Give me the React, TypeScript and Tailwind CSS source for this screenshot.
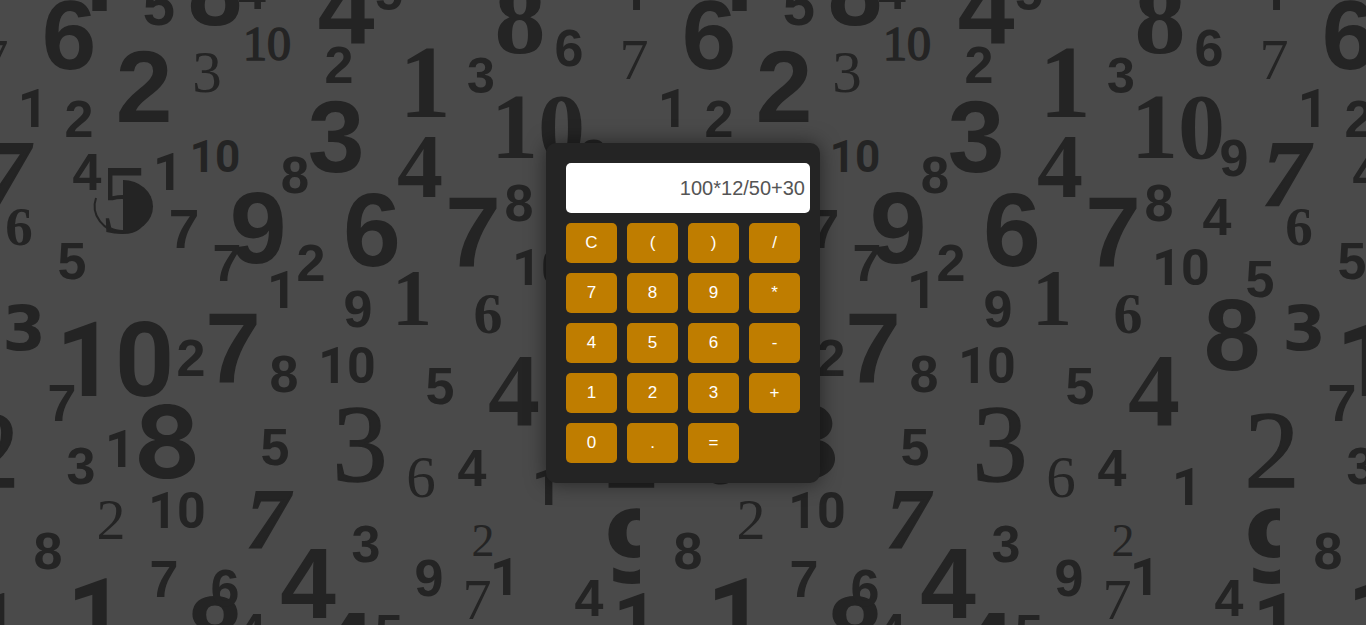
import { useState } from "react";

type Digit = [string, number, number, number, "A" | "R" | "D" | "N" | "T" | "S" | "M" | "I"];

const FONTS = {
    A: "font-['Liberation_Sans',sans-serif] font-bold",
    R: "font-['Roboto',sans-serif] font-bold",
    D: "font-['DejaVu_Sans',sans-serif] font-bold",
    N: "font-['Inter',sans-serif] font-bold",
    T: "font-['Liberation_Serif',serif] font-bold",
    S: "font-['Liberation_Serif',serif]",
    M: "font-['Liberation_Serif',serif] stroke-[#242424] stroke-[1.5px]",
    I: "font-['Liberation_Serif',serif] font-bold italic stroke-[#242424] stroke-2",
};

// text, center x, baseline y, size, font — one 640x640 tile of the wallpaper
const DIGITS: Digit[] = [
    ["6", 69, 69, 98, "A"],
    ["5", 159, 25, 58, "A"],
    ["5", 159, 665, 58, "A"],
    ["8", 215, 25, 98, "A"],
    ["8", 215, 665, 98, "A"],
    ["4", 252, 9, 50, "A"],
    ["4", 252, 649, 50, "A"],
    ["10", 267, 60, 48, "M"],
    ["3", 207, 92, 59, "S"],
    ["2", 144, 122, 102, "A"],
    ["1", 33, 127, 53, "R"],
    ["2", 79, 137, 52, "A"],
    ["7", 646, 205, 93, "I"],
    ["7", 6, 205, 93, "I"],
    ["4", 87, 190, 52, "A"],
    ["5", 125, 233, 100, "S"],
    ["1", 168, 190, 52, "R"],
    ["10", 215, 172, 44, "R"],
    ["8", 295, 193, 51, "A"],
    ["9", 258, 263, 102, "A"],
    ["7", 184, 248, 55, "A"],
    ["6", 19, 245, 55, "T"],
    ["5", 72, 279, 52, "A"],
    ["7", 227, 281, 52, "A"],
    ["2", 311, 281, 52, "A"],
    ["1", 282, 308, 52, "R"],
    ["3", 24, 350, 62, "D"],
    ["10", 115, 396, 103, "R"],
    ["2", 191, 376, 52, "A"],
    ["7", 233, 383, 100, "A"],
    ["8", 284, 392, 52, "A"],
    ["10", 347, 383, 50, "R"],
    ["7", 62, 421, 52, "A"],
    ["2", 632, 487, 110, "M"],
    ["2", -8, 487, 110, "M"],
    ["8", 167, 478, 100, "N"],
    ["3", 81, 484, 52, "A"],
    ["1", 120, 467, 52, "R"],
    ["5", 275, 465, 52, "A"],
    ["3", 360, 481, 110, "M"],
    ["6", 421, 497, 59, "S"],
    ["4", 472, 486, 52, "A"],
    ["1", 547, 505, 52, "R"],
    ["2", 111, 539, 58, "S"],
    ["10", 177, 528, 50, "R"],
    ["7", 268, 548, 85, "I"],
    ["8", 48, 569, 52, "A"],
    ["7", 164, 597, 52, "A"],
    ["6", 225, 606, 52, "A"],
    ["4", 308, 618, 100, "A"],
    ["1", 96, 651, 102, "R"],
    ["1", 96, 11, 102, "R"],
    ["1", 636, 650, 80, "R"],
    ["1", 636, 10, 80, "R"],
    ["1", -4, 650, 80, "R"],
    ["4", 589, 616, 52, "A"],
    ["9", 638, 583, 100, "D"],
    ["2", 483, 556, 46, "S"],
    ["1", 505, 595, 52, "R"],
    ["7", 477, 619, 58, "S"],
    ["9", 429, 596, 52, "A"],
    ["3", 366, 562, 52, "A"],
    ["4", 346, 683, 102, "A"],
    ["4", 346, 43, 102, "A"],
    ["5", 389, 650, 50, "A"],
    ["5", 389, 10, 50, "A"],
    ["2", 339, 83, 52, "A"],
    ["3", 336, 172, 102, "A"],
    ["1", 425, 117, 103, "T"],
    ["4", 420, 197, 92, "T"],
    ["3", 481, 93, 50, "A"],
    ["8", 520, 53, 102, "T"],
    ["8", 520, 693, 102, "T"],
    ["6", 569, 66, 52, "A"],
    ["7", 634, 79, 58, "S"],
    ["7", -6, 79, 58, "S"],
    ["10", 538, 158, 94, "T"],
    ["9", 594, 176, 52, "A"],
    ["8", 519, 221, 52, "A"],
    ["4", 577, 235, 52, "A"],
    ["7", 473, 267, 100, "A"],
    ["6", 372, 266, 104, "A"],
    ["10", 541, 285, 50, "R"],
    ["5", 620, 297, 52, "A"],
    ["1", 412, 325, 80, "T"],
    ["6", 488, 333, 58, "T"],
    ["9", 358, 327, 52, "A"],
    ["8", 592, 370, 102, "A"],
    ["5", 440, 404, 52, "A"],
    ["4", 514, 425, 104, "T"],
];

const KEYS = ["C", "(", ")", "/", "7", "8", "9", "*", "4", "5", "6", "-", "1", "2", "3", "+", "0", ".", "="];

const Tile = () => (
    <svg width="640" height="640" viewBox="0 0 640 640" className="shrink-0 fill-[#242424]" aria-hidden="true">
        {DIGITS.map(([text, x, y, size, font], i) => (
            <text key={i} x={x} y={y} fontSize={size} textAnchor="middle" className={FONTS[font]}>
                {text}
            </text>
        ))}
        {/* the big 5 has a half filled bowl */}
        <path d="M123 180 A30 26.5 0 0 1 123 233 Z" />
        <path d="M96 198 A30 27 0 0 0 123 233" fill="none" stroke="#242424" strokeWidth="2" />
    </svg>
);

const App = () => {
    const [value, setValue] = useState<string>("100*12/50+30");

    const press = (key: string) => {
        if (key === "C") setValue("");
        else if (key !== "=") setValue(value + key);
    };

    return (
        <div className="relative flex h-screen items-center justify-center overflow-hidden bg-[#4a4a4a] font-['Liberation_Sans',Arial,sans-serif]">
            <div className="absolute inset-0 flex">
                <Tile />
                <Tile />
                <Tile />
            </div>

            <div className="relative w-[274px] rounded-[10px] bg-[#242424] p-5 shadow-[0_0_20px_rgba(0,0,0,0.5)]">
                <div className="flex h-[50px] w-[244px] items-center justify-end rounded-[5px] bg-white pr-[5px] text-[20px] text-[#555555]">
                    {value}
                </div>
                <div className="mt-[10px] grid grid-cols-[repeat(4,51px)] gap-[10px]">
                    {KEYS.map((key) => (
                        <button
                            key={key}
                            onClick={() => press(key)}
                            className="h-10 rounded-[5px] bg-[#bf7d00] text-[17px] text-white"
                        >
                            {key}
                        </button>
                    ))}
                </div>
            </div>
        </div>
    );
};

export default App;
